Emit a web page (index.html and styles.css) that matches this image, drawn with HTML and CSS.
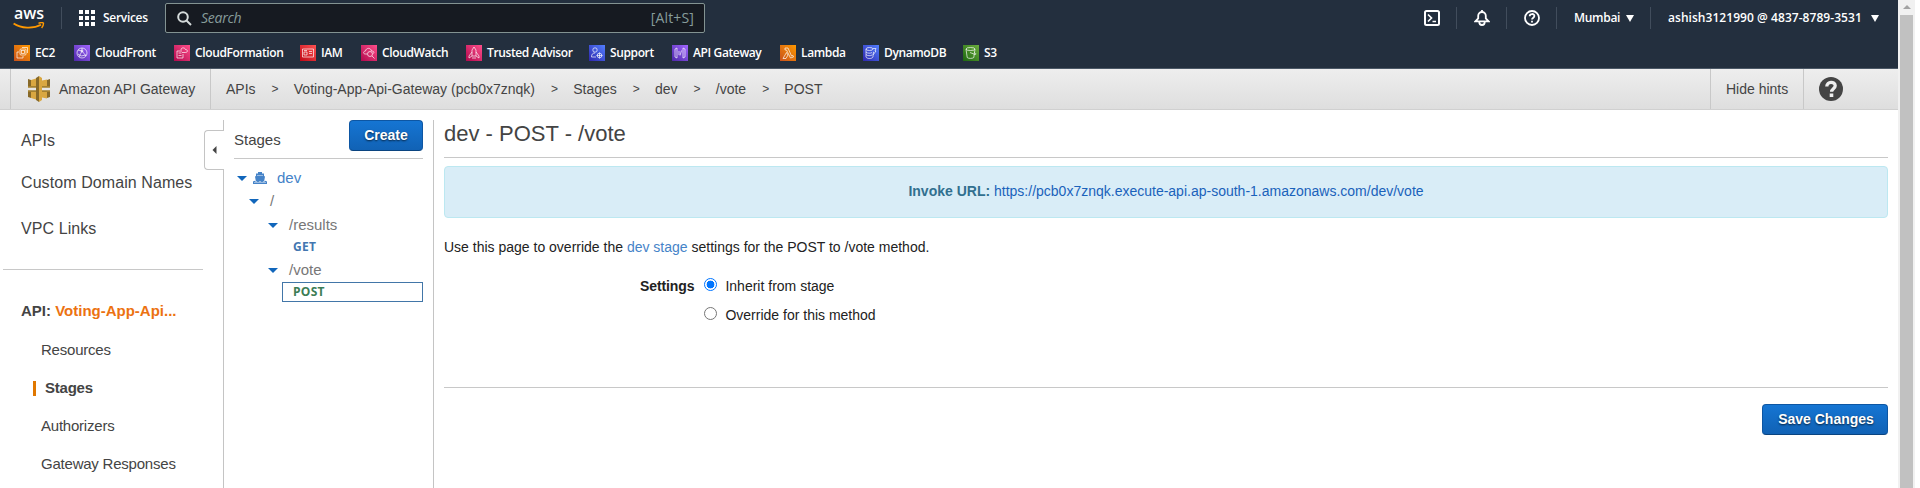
FILE: index.html
```html
<!DOCTYPE html>
<html lang="en">
<head>
<meta charset="utf-8">
<title>API Gateway</title>
<link rel="stylesheet" href="styles.css">
</head>
<body>
<div class="window">
<div class="page">
  <header class="nav">
    <div class="nav-top">
      <div class="logo"><span>aws</span><svg width="32" height="8" viewBox="0 0 32 8"><path d="M.6 1.500C8 6.500 20 7.200 28 2.800" fill="none" stroke="#f90" stroke-width="1.800"/><path d="M25.500 1.300c2-.9 4-.9 4.900-.3.300 1.500-.6 3.500-1.800 5" fill="none" stroke="#f90" stroke-width="1.400"/></svg></div>
      <div class="sep sep-logo"></div>
      <svg class="grid-icon" width="16" height="16" fill="#fff"><path d="M0 0h4v4H0zM6 0h4v4H6zM12 0h4v4h-4zM0 6h4v4H0zM6 6h4v4H6zM12 6h4v4h-4zM0 12h4v4H0zM6 12h4v4H6zM12 12h4v4h-4z"/></svg>
      <span class="services">Services</span>
      <div class="search">
        <svg width="15" height="15" fill="none" stroke="#d5dbdb" stroke-width="2"><circle cx="6" cy="6" r="4.800"/><path d="M9.500 9.500l4.500 4.500"/></svg>
        <span class="search-hint">Search</span><span class="search-key">[Alt+S]</span>
      </div>
      <div class="nav-right">
        <svg width="16" height="16" fill="none" stroke="#fff" stroke-width="2"><rect x="1" y="1" width="14" height="14" rx="1.500"/><path d="M4 4.500L7.500 8 4 11.500M8.500 11.500H12" stroke-width="1.700"/></svg>
        <div class="sep"></div>
        <svg width="16" height="16" fill="none" stroke="#fff" stroke-width="1.800"><path d="M8 0v2M1.500 11.300h13L11.800 8.300V5.800a3.800 3.800 0 0 0-7.600 0v2.500zM5.300 12.300a2.700 2.700 0 0 0 5.400 0"/></svg>
        <div class="sep"></div>
        <svg width="16" height="16" fill="none" stroke="#fff" stroke-width="1.800"><circle cx="8" cy="8" r="7"/><path d="M5.700 6.300c0-3 4.700-3 4.700-.2C10.400 7.700 8 7.700 8 9.600M8 10.800v1.800"/></svg>
        <div class="sep"></div>
        <span class="region">Mumbai</span><i class="down"></i>
        <div class="sep"></div>
        <span class="account">ashish3121990 @ 4837-8789-3531</span><i class="down"></i>
      </div>
    </div>
    <div class="favs">
      <a class="fav"><svg class="ic orange" viewBox="0 0 16 16"><rect x="6" y="4" width="6" height="6" rx="1"/><path d="M5 7H3v6h6v-2M8 2.500h5.500V8"/><rect x="7.500" y="5.500" width="3" height="3"/></svg><span>EC2</span></a>
      <a class="fav"><svg class="ic purple" viewBox="0 0 16 16"><circle cx="8" cy="8" r="5"/><path d="M4 5l4 1 4 5M8 3v3L5 12M4 9l3 2 5-1"/><circle cx="8" cy="6" r="1"/></svg><span>CloudFront</span></a>
      <a class="fav"><svg class="ic pink" viewBox="0 0 16 16"><path d="M8 6H3v7h6V9M4.500 8h3M4.500 10.500h3M7 5c0-3 4-2.500 4.500-.5 2.500 0 2.500 3 0 3H8"/></svg><span>CloudFormation</span></a>
      <a class="fav"><svg class="ic red" viewBox="0 0 16 16"><path d="M2.500 4h11v8h-11zM4 10V7h3v3zM9 6.500h3M9 8.500h3M4 5.500h3"/></svg><span>IAM</span></a>
      <a class="fav"><svg class="ic pink" viewBox="0 0 16 16"><path d="M6 9H4.500c-3 0-2-3 0-3C5 2.500 10 2.500 10.500 6c2 0 3 1 2 2.500"/><circle cx="9" cy="9" r="2.500"/><path d="M11 11l2.500 2.500"/></svg><span>CloudWatch</span></a>
      <a class="fav"><svg class="ic pink" viewBox="0 0 16 16"><path d="M6 11V5l2-3 2 3v6zM6 7l-3 4v2l3-2M10 7l3 4v2l-3-2M7 12v2M9 12v2"/></svg><span>Trusted Advisor</span></a>
      <a class="fav"><svg class="ic blue" viewBox="0 0 16 16"><circle cx="6" cy="5" r="2.200"/><path d="M7 12H2.500c0-3 1.500-4 3.500-4"/><circle cx="10.500" cy="10.500" r="2.300"/><path d="M10.500 7.500v6M7.500 10.500h6"/></svg><span>Support</span></a>
      <a class="fav"><svg class="ic purple" viewBox="0 0 16 16"><path d="M5 3L3 4v8l2 1zM11 3l2 1v8l-2 1zM7 6v4M9.500 5.500l-1.500 5"/></svg><span>API Gateway</span></a>
      <a class="fav"><svg class="ic orange" viewBox="0 0 16 16"><path d="M5 3h3l3.500 8 1.500-.5.500 1.500-3 1L6.500 5H5zM6.500 7.500L8 10l-2 3.500H3z"/></svg><span>Lambda</span></a>
      <a class="fav"><svg class="ic blue" viewBox="0 0 16 16"><ellipse cx="6.500" cy="4" rx="3.500" ry="1.500"/><path d="M3 4v8c1 2 6 2 7 0v-2M3 7c1 1.500 5 1.500 6 .5M3 9.500c1 1.500 5 1.500 6 .5M10 3.500h3l-1 2.500h1l-3 4 .500-3H10"/></svg><span>DynamoDB</span></a>
      <a class="fav"><svg class="ic green" viewBox="0 0 16 16"><ellipse cx="7.500" cy="4" rx="4.500" ry="1.500"/><path d="M3 4l1.200 8.500c1 1.200 5.500 1.200 6.600 0L12 4M7 7.500l5 2c1.500 0 1-1-.5-2"/></svg><span>S3</span></a>
    </div>
  </header>

  <div class="crumbbar">
    <div class="brand">
      <svg width="22" height="26" viewBox="0 0 22 26"><path fill="#876929" d="M0 3l3 1v6H0zM0 16h3v6l-3-1zM22 3l-3 1v6h3zM22 16h-3v6l3-1zM8 2l3-2v26l-3-2z"/><path fill="#a5812f" d="M0 10h8v1.800H0zM0 14.200h8V16H0zM14 10h8v1.800h-8zM14 14.200h8V16h-8z"/><path fill="#d9a741" d="M11 0l3 2v22l-3 2zM3 4l5-1.500V10H3zM3 16h5v7.500L3 22zM14 4.500l5-1v6.500h-5zM14 16h5v6.500l-5-1z"/></svg>
      <span>Amazon API Gateway</span>
    </div>
    <nav class="crumbs"><span>APIs</span><b>&gt;</b><span>Voting-App-Api-Gateway (pcb0x7znqk)</span><b>&gt;</b><span>Stages</span><b>&gt;</b><span>dev</span><b>&gt;</b><span>/vote</span><b>&gt;</b><span>POST</span></nav>
    <div class="hints">Hide hints</div>
    <div class="help"><svg width="24" height="24"><circle cx="12" cy="12" r="12" fill="#444"/><path d="M7.800 9.500C7.800 4 16.200 4.200 16.200 8.800c0 3-3.600 3-3.600 6" fill="none" stroke="#eee" stroke-width="3.300"/><path d="M10.700 16.500h3.600v3.500h-3.600z" fill="#eee"/></svg></div>
  </div>

  <div class="body">
    <aside class="side">
      <a class="main-link l1">APIs</a>
      <a class="main-link l2">Custom Domain Names</a>
      <a class="main-link l3">VPC Links</a>
      <hr class="side-rule">
      <div class="api-name">API: <span>Voting-App-Api...</span></div>
      <a class="sub">Resources</a>
      <a class="sub active">Stages</a>
      <a class="sub">Authorizers</a>
      <a class="sub">Gateway Responses</a>
      <div class="collapse"><svg width="5" height="8"><path d="M4.500 0v8L.5 4z" fill="#444"/></svg></div>
    </aside>
    <section class="stages">
      <div class="stages-head"><span>Stages</span><button class="btn create">Create</button></div>
      <div class="tree">
        <div class="node n-dev"><i class="caret"></i><svg width="14" height="12" viewBox="0 0 14 12" fill="#4583c8"><path d="M5 0h4v1.500h2V4l1 .5-.8 4.500H2.800L2 4.500 3 4V1.500h2z"/><path d="M0 9.500l1.500-.7L3 9.800l2-1 2 1 2-1 2 1 1.500-1 1.500.7v2.500H0z"/><path d="M4 3.500h6M1 10.500h12" stroke="#bcd3ec" stroke-width=".7"/></svg><span>dev</span></div>
        <div class="node n-root"><i class="caret"></i><span>/</span></div>
        <div class="node n-res"><i class="caret"></i><span>/results</span></div>
        <div class="method get">GET</div>
        <div class="node n-vote"><i class="caret"></i><span>/vote</span></div>
        <div class="method post">POST</div>
      </div>
    </section>
    <main class="content">
      <h1>dev - POST - /vote</h1>
      <div class="invoke"><b>Invoke URL:</b> <a>https://pcb0x7znqk.execute-api.ap-south-1.amazonaws.com/dev/vote</a></div>
      <p class="intro">Use this page to override the <a>dev stage</a> settings for the POST to /vote method.</p>
      <div class="settings">
        <b>Settings</b>
        <div class="options">
          <label><i class="radio on"></i><span>Inherit from stage</span></label>
          <label><i class="radio"></i><span>Override for this method</span></label>
        </div>
      </div>
      <div class="actions"><button class="btn save">Save Changes</button></div>
    </main>
  </div>
</div>
<div class="scroll"><i class="up"></i><div class="thumb"></div></div>
</div>
</body>
</html>
```

FILE: styles.css
```css
* { box-sizing: border-box; }
body { margin: 0; background: #fff; font: 14px/20px "Liberation Sans", Arial, sans-serif; color: #444; height: 488px; overflow: hidden; white-space: nowrap; }
.window { display: flex; height: 488px; width: 1915px; }
.page { width: 1898px; }
svg { display: block; flex: none; }

.nav { height: 69px; background: #232f3e; border-bottom: 1px solid #4b5866; color: #fff; font: 600 12px/16px "Open Sans", "Noto Sans", sans-serif; }
.nav-top { display: flex; align-items: center; height: 36px; padding-left: 13px; }
.logo { width: 32px; margin-top: -2px; }
.logo span { display: block; padding-left: 1px; font-size: 16px; line-height: 18px; letter-spacing: -.1px; }
.sep { width: 1px; height: 22px; background: #414d5c; }
.sep-logo { margin-left: 16px; }
.grid-icon { margin-left: 17px; }
.services { margin-left: 8px; width: 62px; letter-spacing: -.3px; }
.search { display: flex; align-items: center; width: 540px; height: 30px; padding: 0 10px 0 11px; background: #161a21; border: 1px solid #839392; border-radius: 2px; font-size: 14px; font-weight: 400; color: #879c9b; }
.search-hint { margin-left: 9px; font-style: italic; letter-spacing: -.25px; }
.search-key { margin-left: auto; letter-spacing: .15px; }
.nav-right { display: flex; align-items: center; margin-left: auto; padding-right: 19px; }
.nav-right .sep { margin: 0 17px 0 16px; }
.region { width: 44px; letter-spacing: -.3px; }
.account { width: 195px; letter-spacing: .05px; }
.down { margin-left: 8px; border: 4px solid transparent; border-top: 7px solid #fff; border-bottom: 0; }
.nav-right .down + .sep { margin-left: 16px; }

.favs { display: grid; grid-template-columns: 60px 100px 126px 61px 105px 123px 83px 108px 83px 100px auto; padding: 9px 0 0 14px; }
.fav { display: flex; align-items: center; gap: 5px; }
.ic { width: 16px; height: 16px; fill: none; stroke: #fff; stroke-opacity: .85; stroke-width: .8; }
.fav span { letter-spacing: -.38px; }
.orange { background: linear-gradient(45deg, #c8511b, #f90); }
.purple { background: linear-gradient(45deg, #4d27a8, #a166ff); }
.pink { background: linear-gradient(45deg, #b0084d, #ff4f8b); }
.red { background: linear-gradient(45deg, #bd0816, #ff5252); }
.blue { background: linear-gradient(45deg, #2e27ad, #527fff); }
.green { background: linear-gradient(45deg, #1b660f, #6cae3e); }

.crumbbar { display: flex; height: 41px; padding-left: 10px; background: linear-gradient(#eee, #dedede); border-bottom: 1px solid #d0d0d0; line-height: 40px; }
.brand { display: flex; align-items: center; gap: 9px; width: 201px; padding-left: 17px; border: 1px solid #c8c8c8; border-width: 0 1px; }
.crumbs { display: flex; padding-left: 15px; }
.crumbs b { font-weight: 400; font-size: 12px; padding: 0 15.200px 0 16px; }
.hints { margin-left: auto; width: 94px; padding-left: 15px; border: 1px solid #c8c8c8; border-width: 0 1px; }
.help { width: 94px; padding: 8px 0 0 15px; }

.body { display: flex; height: 378px; padding-top: 10px; }
.side { position: relative; width: 224px; border-right: 1px solid #c4c4c4; padding-left: 21px; }
.main-link { display: block; font-size: 16px; line-height: 20px; letter-spacing: .08px; }
.l1 { margin-top: 11px; }
.l2 { margin-top: 22px; }
.l3 { margin-top: 26px; }
.side-rule { width: 200px; margin: 30px 0 0 -18px; border: 0; border-top: 1px solid #c8c8c8; }
.api-name { margin-top: 31px; font-size: 15px; font-weight: 700; }
.api-name span { color: #ec7211; }
.sub { display: block; margin-top: 18px; padding-left: 20px; font-size: 15px; letter-spacing: -.22px; }
.api-name + .sub { margin-top: 19px; }
.active { display: flex; align-items: center; padding-left: 12px; font-weight: 700; }
.active::before { content: ""; width: 3px; height: 15px; margin-right: 9px; background: #e07700; }
.collapse { position: absolute; left: 204px; top: 10px; width: 20px; height: 40px; padding: 15px 0 0 7px; background: #fff; border: 1px solid #c4c4c4; border-right: 0; border-radius: 4px 0 0 4px; }

.stages { width: 210px; padding: 0 10px; border-right: 1px solid #c4c4c4; }
.stages-head { display: flex; justify-content: space-between; height: 39px; border-bottom: 1px solid #c8c8c8; font-size: 15px; line-height: 40px; }
.btn { height: 31px; padding: 0; border: 1px solid #0d56a3; border-radius: 4px; border-bottom-color: #0a4480; background: linear-gradient(#1575d3, #1162b5); color: #fff; font: 700 14px/27px "Liberation Sans", Arial, sans-serif; text-shadow: 0 1px 2px rgba(0,0,0,.7); }
.create { width: 74px; }
.save { width: 126px; padding-left: 2px; }
.tree { padding-top: 8px; font-size: 15px; color: #777; }
.node { display: flex; align-items: center; height: 24px; line-height: 20px; }
.caret { border: 5px solid transparent; border-top: 5px solid #1166bb; border-bottom: 0; }
.n-dev { height: 22px; padding-left: 3px; color: #4583c8; }
.n-dev svg { margin: 0 10px 0 6px; }
.n-root { padding-left: 15px; }
.n-root span { margin-left: 11px; }
.n-res, .n-vote { padding-left: 34px; }
.n-res span, .n-vote span { margin-left: 11px; }
.n-vote { height: 25px; padding-top: 1px; }
.method { height: 20px; font: 700 12px/20px "Open Sans", sans-serif; padding-left: 59px; }
.get { color: #4276b0; letter-spacing: .3px; }
.post { margin-left: 48px; padding-left: 10px; line-height: 18px; border: 1px solid #4276a8; color: #3c7d55; letter-spacing: .3px; }

.content { flex: 1; padding: 0 10px; }
h1 { margin: 0; height: 38px; border-bottom: 1px solid #c8c8c8; font-size: 22px; font-weight: 400; line-height: 27px; }
.invoke { height: 52px; margin-top: 8px; border: 1px solid #bce8f1; border-radius: 4px; background: #d9edf7; color: #31708f; text-align: center; line-height: 49px; }
.invoke a { color: #1a62bb; }
.intro { margin: 19px 0 0; color: #222; }
.intro a { color: #4583c8; }
.settings { display: flex; height: 131px; padding: 19px 0 0 196px; border-bottom: 1px solid #c8c8c8; color: #222; }
.settings b { letter-spacing: -.1px; }
.options { margin-left: 10px; }
.options label { display: flex; height: 29px; }
.radio { width: 13px; height: 13px; margin: 2px 8px 0 0; border: 1px solid #767676; border-radius: 50%; }
.radio.on { border-color: #0075ff; background: radial-gradient(circle, #0075ff 3.600px, #fff 4.200px); }
.actions { display: flex; justify-content: flex-end; padding-top: 16px; }

.scroll { width: 17px; background: #f1f1f1; padding: 5px 2px 0; }
.up { display: block; width: 8px; margin-left: 3px; border: 4px solid transparent; border-top: 0; border-bottom: 4px solid #a3a3a3; }
.thumb { height: 480px; margin-top: 6px; background: #c1c1c1; width: 13px; }
```
